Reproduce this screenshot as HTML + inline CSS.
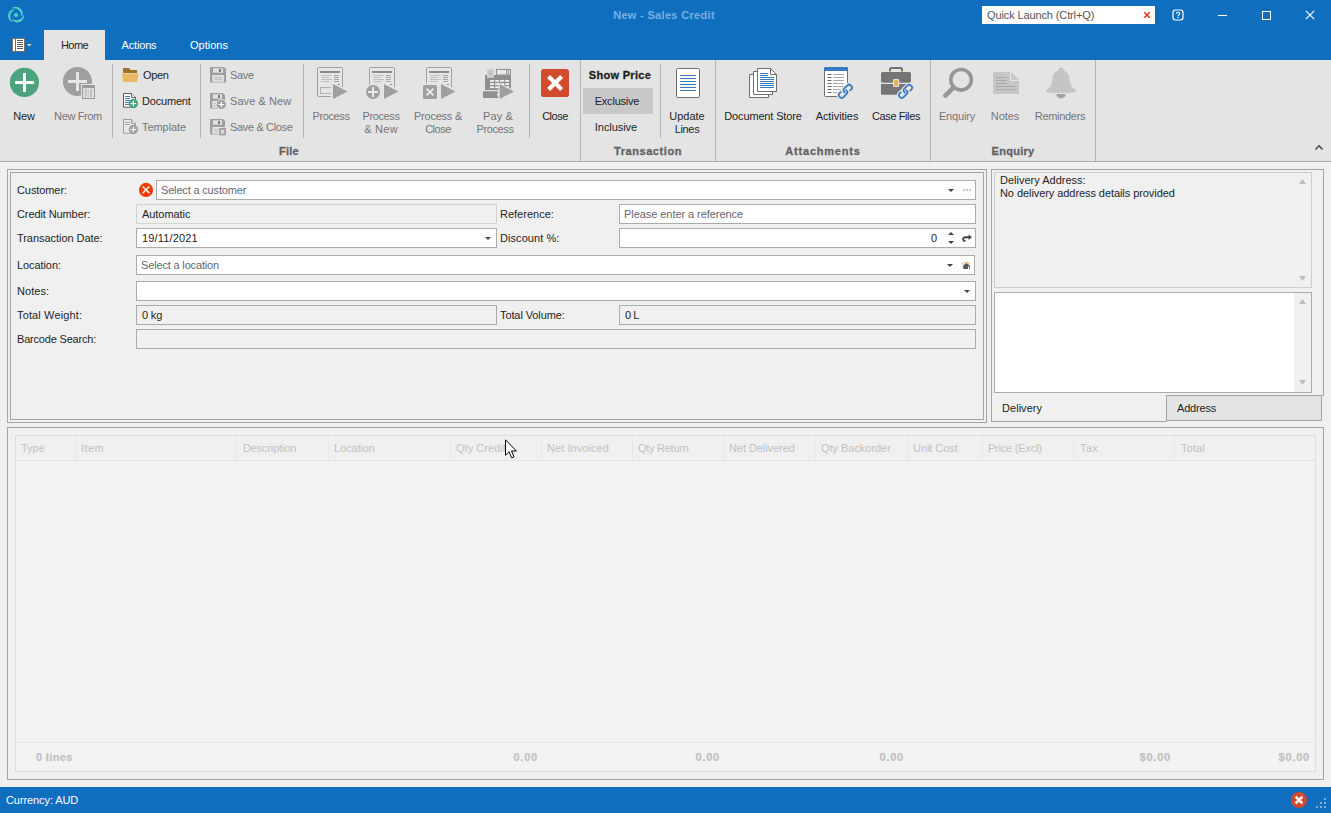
<!DOCTYPE html>
<html>
<head>
<meta charset="utf-8">
<title>New - Sales Credit</title>
<style>
*{box-sizing:border-box;margin:0;padding:0}
html,body{width:1331px;height:813px;overflow:hidden;background:#f0f0f0}
body{font-family:"Liberation Sans",sans-serif;font-size:11px;color:#1e1e1e;position:relative}
.a{position:absolute}
.t{position:absolute;white-space:nowrap;line-height:13px;height:13px}
.c{text-align:center}
.dis{color:#757575}
.b{font-weight:bold}
/* chrome */
#hdr{left:0;top:0;width:1331px;height:60px;background:#106ebe}
#rib{left:0;top:60px;width:1331px;height:101px;background:#e4e4e4}
#ribline{left:0;top:161px;width:1331px;height:1px;background:#ababab}
.vsep{position:absolute;width:1px;background:#b4b4b4;top:64px;height:74px}
.gsep{position:absolute;width:1px;background:#b4b4b4;top:60px;height:101px}
.glab{-webkit-text-stroke:0.3px #636363;position:absolute;white-space:nowrap;font-weight:bold;font-size:11px;color:#636363;line-height:14px;height:14px;text-align:center}
/* form */
.fld{position:absolute;height:20px;border:1px solid #ababab;background:#fff}
.fld.ro{background:#f0f0f0;border-color:#d2d2d2}
.fld.ro2{background:#f0f0f0;border-color:#ababab}
.ph{color:#666672}
.box{position:absolute;border:1px solid #a5a5a5}
/* grid */
.gh{color:#c2c2c2}
.gf{color:#c2c2c2;font-weight:bold;-webkit-text-stroke:0.25px #c2c2c2}
.gcs{position:absolute;top:436px;width:1px;height:24px;background:#e8e8e8}
</style>
</head>
<body>
<!-- ===== title bar / tabs ===== -->
<div id="hdr" class="a"></div>
<div class="a" style="left:44px;top:30px;width:61px;height:31px;background:#e4e4e4"></div>
<div class="t c" style="left:44px;top:39px;width:61px;font-size:11px;letter-spacing:-0.60px">Home</div>
<div class="t c" style="left:108px;top:39px;width:62px;color:#fff;font-size:11px;letter-spacing:-0.18px">Actions</div>
<div class="t c" style="left:178px;top:39px;width:62px;color:#fff;font-size:11px">Options</div>
<div class="t c b" style="left:564px;top:8px;width:200px;color:#78aee6;font-size:11px;line-height:14px;height:14px;letter-spacing:0.32px">New - Sales Credit</div>
<!-- quick launch -->
<div class="a" style="left:982px;top:6px;width:173px;height:18px;background:#fff"></div>
<div class="t" style="left:987px;top:9px;color:#555;font-size:11px;letter-spacing:-0.12px">Quick Launch (Ctrl+Q)</div>

<!-- app logo -->
<svg class="a" style="left:7px;top:6px" width="18" height="18" viewBox="-9 -9 18 18">
 <g fill="#52d0c0"><path d="M-4.86 -6.23 L-4.23 -6.81 L-3.50 -7.28 L-2.71 -7.66 L-1.88 -7.92 L-1.02 -8.09 L-0.14 -8.15 L0.73 -8.09 L1.59 -7.93 L2.42 -7.67 L3.20 -7.31 L3.93 -6.85 L4.58 -6.31 L5.16 -5.70 L5.65 -5.03 L6.04 -4.31 L6.33 -3.56 L6.51 -2.79 L6.60 -2.02 L6.57 -1.26 L6.46 -0.53 L6.24 0.16 L5.94 0.80 L5.56 1.37 L5.07 1.85 L5.07 1.85 L5.13 1.26 L5.17 0.70 L5.18 0.14 L5.14 -0.42 L5.06 -0.97 L4.93 -1.51 L4.76 -2.04 L4.54 -2.55 L4.28 -3.05 L3.98 -3.54 L3.63 -4.01 L3.23 -4.45 L2.79 -4.87 L2.30 -5.26 L1.77 -5.61 L1.19 -5.92 L0.56 -6.19 L-0.11 -6.40 L-0.82 -6.55 L-1.57 -6.64 L-2.35 -6.65 L-3.16 -6.58 L-3.99 -6.43 L-4.86 -6.23Z"/><path d="M7.82 -1.10 L8.02 -0.26 L8.06 0.61 L7.98 1.48 L7.80 2.34 L7.51 3.16 L7.13 3.95 L6.64 4.68 L6.08 5.34 L5.43 5.93 L4.73 6.43 L3.97 6.83 L3.17 7.13 L2.35 7.32 L1.53 7.40 L0.71 7.38 L-0.08 7.26 L-0.84 7.03 L-1.55 6.72 L-2.20 6.32 L-2.77 5.85 L-3.26 5.33 L-3.67 4.75 L-3.97 4.13 L-4.14 3.47 L-4.14 3.47 L-3.66 3.81 L-3.19 4.13 L-2.71 4.42 L-2.21 4.66 L-1.69 4.86 L-1.16 5.02 L-0.62 5.14 L-0.06 5.21 L0.50 5.23 L1.08 5.21 L1.65 5.14 L2.24 5.02 L2.82 4.85 L3.40 4.62 L3.97 4.34 L4.54 3.99 L5.08 3.58 L5.60 3.10 L6.09 2.56 L6.54 1.96 L6.94 1.29 L7.28 0.55 L7.57 -0.24 L7.82 -1.10Z"/><path d="M-2.96 7.32 L-3.79 7.07 L-4.56 6.67 L-5.27 6.18 L-5.92 5.59 L-6.50 4.93 L-6.98 4.20 L-7.37 3.41 L-7.67 2.59 L-7.85 1.74 L-7.93 0.88 L-7.90 0.02 L-7.76 -0.82 L-7.52 -1.62 L-7.18 -2.38 L-6.75 -3.08 L-6.24 -3.70 L-5.67 -4.25 L-5.04 -4.70 L-4.38 -5.06 L-3.68 -5.33 L-2.98 -5.49 L-2.28 -5.55 L-1.60 -5.50 L-0.94 -5.32 L-0.94 -5.32 L-1.47 -5.07 L-1.98 -4.83 L-2.47 -4.55 L-2.93 -4.24 L-3.37 -3.89 L-3.77 -3.51 L-4.14 -3.10 L-4.48 -2.66 L-4.78 -2.18 L-5.05 -1.67 L-5.28 -1.14 L-5.47 -0.57 L-5.61 0.02 L-5.70 0.63 L-5.74 1.27 L-5.72 1.93 L-5.64 2.61 L-5.49 3.30 L-5.26 3.99 L-4.96 4.68 L-4.58 5.36 L-4.12 6.03 L-3.57 6.67 L-2.96 7.32Z"/></g>
 <circle cx="0" cy="0" r="2.0" fill="#52d0c0"/>
 <circle cx="0" cy="0" r="3.5" fill="none" stroke="#2f8fd0" stroke-width="0.6" opacity="0.5"/>
</svg>
<!-- menu button -->
<svg class="a" style="left:12px;top:38px" width="22" height="14" viewBox="0 0 22 14">
 <rect x="0.5" y="0.5" width="12" height="13" fill="#fff" stroke="#7d6e66" stroke-width="1"/>
 <rect x="3" y="1" width="1" height="12" fill="#6a6a6a"/>
 <g fill="#5a5a5a"><rect x="5" y="2" width="6" height="1"/><rect x="5" y="4" width="6" height="1"/><rect x="5" y="6" width="6" height="1"/><rect x="5" y="8" width="6" height="1"/><rect x="5" y="10" width="6" height="1"/></g>
 <path d="M14.7 6 L19.7 6 L17.2 8.6 Z" fill="#dcd6d0"/>
</svg>
<!-- quick launch clear -->
<svg class="a" style="left:1143px;top:11px" width="8" height="8" viewBox="0 0 8 8"><path d="M1.2 1.2 L6.8 6.8 M6.8 1.2 L1.2 6.8" stroke="#e03c14" stroke-width="1.6"/></svg>
<!-- help -->
<svg class="a" style="left:1172px;top:9px" width="12" height="12" viewBox="0 0 12 12">
 <rect x="1" y="1" width="10" height="10" rx="2.4" fill="none" stroke="#fff" stroke-width="1.2"/>
 <path d="M4.3 4.7 Q4.3 3.2 6 3.2 Q7.7 3.2 7.7 4.6 Q7.7 5.5 6.7 6 Q6 6.4 6 7.2" fill="none" stroke="#fff" stroke-width="1.1"/>
 <rect x="5.45" y="7.9" width="1.1" height="1.1" fill="#fff"/>
</svg>
<!-- minimize -->
<div class="a" style="left:1218px;top:15px;width:9px;height:1px;background:#fff"></div>
<!-- maximize -->
<div class="a" style="left:1262px;top:11px;width:9px;height:9px;border:1px solid #fff"></div>
<!-- close -->
<svg class="a" style="left:1305px;top:10px" width="10" height="10" viewBox="0 0 10 10"><path d="M0.8 0.8 L9.2 9.2 M9.2 0.8 L0.8 9.2" stroke="#fff" stroke-width="1.2"/></svg>
<!--ICONS-HDR-->

<!-- ===== ribbon ===== -->
<div id="rib" class="a"></div>
<div id="ribline" class="a"></div>
<div class="vsep" style="left:112px"></div>
<div class="vsep" style="left:200px"></div>
<div class="vsep" style="left:303px"></div>
<div class="vsep" style="left:529px"></div>
<div class="vsep" style="left:660px"></div>
<div class="gsep" style="left:580px"></div>
<div class="gsep" style="left:715px"></div>
<div class="gsep" style="left:930px"></div>
<div class="gsep" style="left:1095px"></div>

<div class="t c" style="left:0;top:110px;width:48px;letter-spacing:-0.11px">New</div>
<div class="t c dis" style="left:48px;top:110px;width:60px;letter-spacing:-0.36px">New From</div>
<div class="t" style="left:143px;top:69px;letter-spacing:-0.37px">Open</div>
<div class="t" style="left:142px;top:95px;letter-spacing:-0.19px">Document</div>
<div class="t dis" style="left:142px;top:121px;letter-spacing:-0.06px">Template</div>
<div class="t dis" style="left:230px;top:69px;letter-spacing:-0.33px">Save</div>
<div class="t dis" style="left:230px;top:95px;letter-spacing:0.07px">Save &amp; New</div>
<div class="t dis" style="left:230px;top:121px;letter-spacing:-0.35px">Save &amp; Close</div>
<div class="t c dis" style="left:306px;top:110px;width:50px;letter-spacing:-0.38px">Process</div>
<div class="t c dis" style="left:356px;top:110px;width:50px;letter-spacing:-0.38px">Process</div>
<div class="t c dis" style="left:356px;top:123px;width:50px;letter-spacing:0.27px">&amp; New</div>
<div class="t c dis" style="left:408px;top:110px;width:60px;letter-spacing:-0.23px">Process &amp;</div>
<div class="t c dis" style="left:408px;top:123px;width:60px;letter-spacing:-0.48px">Close</div>
<div class="t c dis" style="left:471px;top:110px;width:54px;letter-spacing:0.09px">Pay &amp;</div>
<div class="t c dis" style="left:468px;top:123px;width:54px;letter-spacing:-0.38px">Process</div>
<div class="t c" style="left:530px;top:110px;width:50px;letter-spacing:-0.48px">Close</div>
<div class="t c b" style="left:583px;top:68px;width:74px;font-size:11px;line-height:14px;color:#1e1e1e;-webkit-text-stroke:0.3px #1e1e1e;letter-spacing:0.30px">Show Price</div>
<div class="a" style="left:583px;top:88px;width:70px;height:26px;background:#c8c8c8"></div>
<div class="t c" style="left:583px;top:95px;width:68px;letter-spacing:-0.21px">Exclusive</div>
<div class="t c" style="left:583px;top:121px;width:66px;letter-spacing:-0.06px">Inclusive</div>
<div class="t c" style="left:662px;top:110px;width:50px">Update</div>
<div class="t c" style="left:662px;top:123px;width:50px;letter-spacing:-0.32px">Lines</div>
<div class="t c" style="left:718px;top:110px;width:90px;letter-spacing:-0.15px">Document Store</div>
<div class="t c" style="left:808px;top:110px;width:58px;letter-spacing:-0.07px">Activities</div>
<div class="t c" style="left:866px;top:110px;width:60px;letter-spacing:-0.40px">Case Files</div>
<div class="t c dis" style="left:932px;top:110px;width:50px;letter-spacing:-0.15px">Enquiry</div>
<div class="t c dis" style="left:982px;top:110px;width:46px;letter-spacing:-0.06px">Notes</div>
<div class="t c dis" style="left:1030px;top:110px;width:60px;letter-spacing:-0.32px">Reminders</div>

<div class="glab" style="left:259px;top:144px;width:60px;letter-spacing:0.28px">File</div>
<div class="glab" style="left:598px;top:144px;width:100px;letter-spacing:0.56px">Transaction</div>
<div class="glab" style="left:773px;top:144px;width:100px;letter-spacing:0.79px">Attachments</div>
<div class="glab" style="left:983px;top:144px;width:60px;letter-spacing:0.26px">Enquiry</div>

<!-- New -->
<svg class="a" style="left:8px;top:66px" width="34" height="34" viewBox="8 66 34 34">
 <circle cx="24.4" cy="82.4" r="14.6" fill="#4ca47f"/>
 <rect x="15" y="81" width="19" height="3" fill="#fff"/><rect x="23" y="73" width="3" height="19" fill="#fff"/>
</svg>
<!-- New From -->
<svg class="a" style="left:61px;top:65px" width="36" height="36" viewBox="61 65 36 36">
 <circle cx="77.4" cy="81.4" r="14.5" fill="#9f9f9f"/>
 <rect x="68" y="80" width="19" height="3" fill="#e6e6e6"/><rect x="76" y="72" width="3" height="19" fill="#e6e6e6"/>
 <rect x="81" y="84" width="15" height="16" fill="#e4e4e4"/>
 <rect x="82.5" y="85.5" width="12" height="13" fill="#dedede" stroke="#9a9a9a" stroke-width="1"/>
 <rect x="83" y="86" width="11" height="2" fill="#9a9a9a"/>
 <rect x="85" y="89" width="2" height="8" fill="#c2c2c2"/><rect x="88" y="89" width="1" height="8" fill="#cfcfcf"/><rect x="90" y="89" width="2" height="8" fill="#c2c2c2"/>
</svg>

<!-- Open -->
<svg class="a" style="left:122px;top:68px" width="17" height="15" viewBox="0 0 17 15">
 <path d="M1 0 L7 0 L8.6 1.9 L15 1.9 L15 5 L1 5 Z" fill="#9a7428"/>
 <path d="M0 5.6 L16.3 5.6 L15.3 14 L1 14 Z" fill="#e9b863"/>
</svg>
<!-- Document -->
<svg class="a" style="left:122px;top:92px" width="17" height="17" viewBox="0 0 17 17">
 <path d="M1.5 1.5 L9.5 1.5 L13.4 5.4 L13.4 15.2 L1.5 15.2 Z" fill="#fff" stroke="#5a5a5a" stroke-width="1" stroke-linejoin="round"/>
 <path d="M9.5 1.5 L9.5 5.4 L13.4 5.4" fill="#fff" stroke="#5a5a5a" stroke-width="1" stroke-linejoin="round"/>
 <rect x="3" y="4" width="5" height="1" fill="#3f80c6"/><rect x="3" y="6" width="5" height="1" fill="#3f80c6"/><rect x="3" y="8" width="5" height="1" fill="#3f80c6"/><rect x="3" y="10" width="5" height="1" fill="#3f80c6"/><rect x="3" y="12" width="5" height="1" fill="#3f80c6"/>
 <circle cx="11.4" cy="11.5" r="4.7" fill="#4ca47f"/>
 <rect x="8.6" y="11" width="5.6" height="1.1" fill="#fff"/><rect x="10.85" y="8.7" width="1.1" height="5.6" fill="#fff"/>
</svg>
<!-- Template -->
<svg class="a" style="left:122px;top:118px" width="17" height="17" viewBox="0 0 17 17">
 <path d="M1.5 1.5 L9.5 1.5 L13.4 5.4 L13.4 15.2 L1.5 15.2 Z" fill="#e8e8e8" stroke="#9c9c9c" stroke-width="1" stroke-linejoin="round"/>
 <path d="M9.5 1.5 L9.5 5.4 L13.4 5.4" fill="#e8e8e8" stroke="#9c9c9c" stroke-width="1" stroke-linejoin="round"/>
 <rect x="3" y="4" width="5" height="1" fill="#a8a8a8"/><rect x="3" y="6" width="5" height="1" fill="#a8a8a8"/>
 <circle cx="11.4" cy="11.5" r="4.7" fill="#a0a0a0"/>
 <rect x="8.6" y="11" width="5.6" height="1.1" fill="#fff"/><rect x="10.85" y="8.7" width="1.1" height="5.6" fill="#fff"/>
</svg>

<!-- Save -->
<svg class="a" style="left:210px;top:67px" width="18" height="18" viewBox="0 0 18 18">
 <path d="M0 0 L14 0 L16 2 L16 15.6 L0 15.6 Z" fill="#9f9f9f"/>
 <rect x="3" y="1.3" width="10" height="4.4" fill="#e2e2e2"/>
 <rect x="9" y="2" width="2" height="3" fill="#7a7a7a"/>
 <rect x="2.3" y="8" width="11.6" height="6.8" fill="#e2e2e2"/>
 <rect x="4" y="10" width="8" height="0.9" fill="#b8b8b8"/><rect x="4" y="12.2" width="8" height="0.9" fill="#b8b8b8"/>
 
</svg>
<!-- Save & New -->
<svg class="a" style="left:210px;top:93px" width="18" height="18" viewBox="0 0 18 18">
 <path d="M0 0 L13 0 L15 2 L15 15.6 L0 15.6 Z" fill="#9f9f9f"/>
 <rect x="3" y="1.3" width="9" height="4.4" fill="#e2e2e2"/>
 <rect x="8" y="2" width="2" height="3" fill="#7a7a7a"/>
 <rect x="2.3" y="8" width="10.6" height="6.8" fill="#e2e2e2"/>
 <rect x="4" y="10" width="7" height="0.9" fill="#b8b8b8"/><rect x="4" y="12.2" width="7" height="0.9" fill="#b8b8b8"/>
 <circle cx="11.4" cy="11.5" r="5.4" fill="#e4e4e4"/><circle cx="11.4" cy="11.5" r="4.6" fill="#a0a0a0"/>
 <rect x="8.6" y="11" width="5.6" height="1.1" fill="#fff"/><rect x="10.85" y="8.7" width="1.1" height="5.6" fill="#fff"/>
</svg>
<!-- Save & Close -->
<svg class="a" style="left:210px;top:119px" width="18" height="18" viewBox="0 0 18 18">
 <path d="M0 0 L13 0 L15 2 L15 15.6 L0 15.6 Z" fill="#9f9f9f"/>
 <rect x="3" y="1.3" width="9" height="4.4" fill="#e2e2e2"/>
 <rect x="8" y="2" width="2" height="3" fill="#7a7a7a"/>
 <rect x="2.3" y="8" width="10.6" height="6.8" fill="#e2e2e2"/>
 <rect x="4" y="10" width="7" height="0.9" fill="#b8b8b8"/><rect x="4" y="12.2" width="7" height="0.9" fill="#b8b8b8"/>
 <rect x="8.2" y="8.2" width="9" height="9" fill="#e4e4e4"/><rect x="9" y="9" width="7" height="7.4" fill="#a0a0a0"/>
 <path d="M10.8 10.9 L14.2 14.5 M14.2 10.9 L10.8 14.5" stroke="#e8e8e8" stroke-width="1.3"/>
</svg>

<!-- Process -->
<svg class="a" style="left:314px;top:64px" width="36" height="38" viewBox="314 64 36 38">
 <rect x="317.5" y="67.5" width="25" height="29" rx="1.2" fill="#e6e6e6" stroke="#9f9f9f" stroke-width="1"/>
 <rect x="320.0" y="71" width="20" height="2" fill="#8c8c8c"/>
 <rect x="321.0" y="75" width="11" height="1" fill="#c0c0c0"/>
 <rect x="334.0" y="75" width="5" height="1" fill="#a6a6a6"/>
 <rect x="321.0" y="77" width="8" height="1" fill="#c0c0c0"/>
 <rect x="334.0" y="77" width="5" height="1" fill="#a6a6a6"/>
 <rect x="321.0" y="79" width="11" height="1" fill="#c0c0c0"/>
 <rect x="334.0" y="79" width="5" height="1" fill="#a6a6a6"/>
 <rect x="321.0" y="81" width="8" height="1" fill="#c0c0c0"/>
 <rect x="334.0" y="81" width="5" height="1" fill="#a6a6a6"/>
 <rect x="338.0" y="84" width="2" height="1" fill="#8c8c8c"/>
 <rect x="320.5" y="87.5" width="11" height="6" fill="none" stroke="#b2b2b2" stroke-width="1"/><rect x="331" y="87" width="13" height="11" fill="#e4e4e4"/>
 <path d="M331.8 82.3 L349.3 91.5 L331.8 100.7 Z" fill="#e4e4e4"/><path d="M333 84 L347.4 91.5 L333 99 Z" fill="#9f9f9f"/>
</svg>
<!-- Process & New -->
<svg class="a" style="left:364px;top:64px" width="36" height="38" viewBox="364 64 36 38">
 <rect x="369.5" y="67.5" width="25" height="29" rx="1.2" fill="#e6e6e6" stroke="#9f9f9f" stroke-width="1"/>
 <rect x="372.0" y="71" width="20" height="2" fill="#8c8c8c"/>
 <rect x="373.0" y="75" width="11" height="1" fill="#c0c0c0"/>
 <rect x="386.0" y="75" width="5" height="1" fill="#a6a6a6"/>
 <rect x="373.0" y="77" width="8" height="1" fill="#c0c0c0"/>
 <rect x="386.0" y="77" width="5" height="1" fill="#a6a6a6"/>
 <rect x="373.0" y="79" width="11" height="1" fill="#c0c0c0"/>
 <rect x="386.0" y="79" width="5" height="1" fill="#a6a6a6"/>
 <rect x="373.0" y="81" width="8" height="1" fill="#c0c0c0"/>
 <rect x="386.0" y="81" width="5" height="1" fill="#a6a6a6"/>
 <rect x="390.0" y="84" width="2" height="1" fill="#8c8c8c"/>
 <rect x="366" y="84.6" width="20" height="14" fill="#e4e4e4"/><rect x="386" y="87.2" width="12" height="12" fill="#e4e4e4"/>
 <circle cx="373" cy="92" r="7" fill="#9f9f9f"/><rect x="368" y="91" width="10" height="2" fill="#e8e8e8"/><rect x="372" y="87" width="2" height="10" fill="#e8e8e8"/>
 <path d="M382.8 82.3 L400.3 91.5 L382.8 100.7 Z" fill="#e4e4e4"/><path d="M384 84 L398.4 91.5 L384 99 Z" fill="#9f9f9f"/>
</svg>
<!-- Process & Close -->
<svg class="a" style="left:420px;top:64px" width="38" height="38" viewBox="420 64 38 38">
 <rect x="426.5" y="67.5" width="25" height="29" rx="1.2" fill="#e6e6e6" stroke="#9f9f9f" stroke-width="1"/>
 <rect x="429.0" y="71" width="20" height="2" fill="#8c8c8c"/>
 <rect x="430.0" y="75" width="11" height="1" fill="#c0c0c0"/>
 <rect x="443.0" y="75" width="5" height="1" fill="#a6a6a6"/>
 <rect x="430.0" y="77" width="8" height="1" fill="#c0c0c0"/>
 <rect x="443.0" y="77" width="5" height="1" fill="#a6a6a6"/>
 <rect x="430.0" y="79" width="11" height="1" fill="#c0c0c0"/>
 <rect x="443.0" y="79" width="5" height="1" fill="#a6a6a6"/>
 <rect x="430.0" y="81" width="8" height="1" fill="#c0c0c0"/>
 <rect x="443.0" y="81" width="5" height="1" fill="#a6a6a6"/>
 <rect x="447.0" y="84" width="2" height="1" fill="#8c8c8c"/>
 <rect x="422" y="83.6" width="20" height="15" fill="#e4e4e4"/><rect x="442" y="87.2" width="12" height="12" fill="#e4e4e4"/>
 <rect x="423" y="85" width="14" height="14" rx="1.6" fill="#9f9f9f"/><path d="M426.6 88.6 L433.4 95.4 M433.4 88.6 L426.6 95.4" stroke="#e8e8e8" stroke-width="2"/>
 <path d="M439.8 82.3 L457.3 91.5 L439.8 100.7 Z" fill="#e4e4e4"/><path d="M441 84 L455.4 91.5 L441 99 Z" fill="#9f9f9f"/>
</svg>
<!-- Pay & Process -->
<svg class="a" style="left:481px;top:64px" width="36" height="38" viewBox="481 64 36 38">
 <rect x="485" y="75" width="26" height="15" fill="#8f8f8f"/>
 <rect x="487" y="68.8" width="7" height="9" fill="#cfcfcf"/><rect x="489" y="71.5" width="3" height="0.9" fill="#a8a8a8"/><rect x="489" y="73.5" width="3" height="0.9" fill="#a8a8a8"/>
 <rect x="496.5" y="69.4" width="14" height="5.6" fill="#e8e8e8" stroke="#8f8f8f" stroke-width="1"/>
 <rect x="506.6" y="70.6" width="2" height="3" fill="none" stroke="#8f8f8f" stroke-width="0.8"/>
 <rect x="490" y="80" width="4" height="1.8" fill="#f0f0f0"/><rect x="495.1" y="80" width="4" height="1.8" fill="#f0f0f0"/><rect x="500.2" y="80" width="4" height="1.8" fill="#f0f0f0"/><rect x="505.2" y="80" width="4" height="1.8" fill="#f0f0f0"/><rect x="490" y="83.2" width="4" height="1.8" fill="#f0f0f0"/><rect x="495.1" y="83.2" width="4" height="1.8" fill="#f0f0f0"/><rect x="500.2" y="83.2" width="4" height="1.8" fill="#f0f0f0"/><rect x="505.2" y="83.2" width="4" height="1.8" fill="#f0f0f0"/><rect x="490" y="86.3" width="4" height="1.8" fill="#f0f0f0"/><rect x="495.1" y="86.3" width="4" height="1.8" fill="#f0f0f0"/><rect x="500.2" y="86.3" width="4" height="1.8" fill="#f0f0f0"/><rect x="505.2" y="86.3" width="4" height="1.8" fill="#f0f0f0"/>
 <path d="M483 91.3 L498 91.3 L498 93 Q496 94.6 498 96.2 L498 98 L483 98 Z" fill="#8f8f8f"/>
 <path d="M498.40000000000003 82.3 L515.9 91.5 L498.40000000000003 100.7 Z" fill="#e4e4e4"/><path d="M499.6 84 L514.0 91.5 L499.6 99 Z" fill="#9f9f9f"/>
</svg>

<!-- Close -->
<svg class="a" style="left:540px;top:68px" width="30" height="30" viewBox="540 68 30 30">
 <rect x="541" y="69" width="28" height="28" rx="2.8" fill="#d14b2d"/><path d="M548.6 76.6 L561.6 89.6 M561.6 76.6 L548.6 89.6" stroke="#fff" stroke-width="4.2"/>
</svg>
<!-- Update Lines -->
<svg class="a" style="left:675px;top:67px" width="26" height="32" viewBox="675 67 26 32">
 <rect x="676.5" y="68.5" width="23" height="29" rx="1.2" fill="#fff" stroke="#6f6f6f" stroke-width="1"/><rect x="680" y="75" width="16" height="1" fill="#3b78be"/><rect x="680" y="78" width="16" height="1" fill="#3b78be"/><rect x="680" y="81" width="16" height="1" fill="#3b78be"/><rect x="680" y="84" width="16" height="1" fill="#3b78be"/><rect x="680" y="87" width="16" height="1" fill="#3b78be"/><rect x="680" y="90" width="16" height="1" fill="#3b78be"/>
</svg>
<!-- Document Store -->
<svg class="a" style="left:748px;top:67px" width="30" height="32" viewBox="748 67 30 32">
 <path d="M753 74.5 L749.5 74.5 L749.5 97.5 L768.5 97.5 L768.5 95" fill="#fff" stroke="#6f6f6f" stroke-width="1" stroke-linejoin="round"/>
 <rect x="750" y="75" width="18" height="22" fill="#fff"/>
 <path d="M757 71.5 L753.5 71.5 L753.5 94.5 L772.5 94.5 L772.5 92" fill="#fff" stroke="#6f6f6f" stroke-width="1" stroke-linejoin="round"/>
 <rect x="754" y="72" width="18" height="22" fill="#fff"/>
 <path d="M757.5 68.5 L770.5 68.5 L776.5 74.5 L776.5 91.5 L757.5 91.5 Z" fill="#fff" stroke="#6f6f6f" stroke-width="1" stroke-linejoin="round"/>
 <path d="M770.5 68.5 L770.5 74.5 L776.5 74.5" fill="none" stroke="#6f6f6f" stroke-width="1" stroke-linejoin="round"/><rect x="760" y="73" width="8" height="1" fill="#3b78be"/><rect x="760" y="75" width="8" height="1" fill="#3b78be"/><rect x="760" y="77" width="14" height="1" fill="#3b78be"/><rect x="760" y="79" width="14" height="1" fill="#3b78be"/><rect x="760" y="81" width="14" height="1" fill="#3b78be"/><rect x="760" y="83" width="14" height="1" fill="#3b78be"/><rect x="760" y="85" width="14" height="1" fill="#3b78be"/><rect x="760" y="87" width="14" height="1" fill="#3b78be"/>
</svg>
<!-- Activities -->
<svg class="a" style="left:822px;top:65px" width="34" height="36" viewBox="822 65 34 36">
 <rect x="824.5" y="67.5" width="23" height="29" rx="1" fill="#fff" stroke="#6f6f6f" stroke-width="1"/>
 <path d="M824 71 L824 68.2 Q824 67 825.2 67 L846.8 67 Q848 67 848 68.2 L848 71 Z" fill="#3a7abf"/><rect x="827.5" y="74" width="4" height="1" fill="#666"/><rect x="833" y="74" width="11" height="1" fill="#aaa"/><rect x="827.5" y="77" width="4" height="1" fill="#666"/><rect x="833" y="77" width="11" height="1" fill="#aaa"/><rect x="827.5" y="80" width="4" height="1" fill="#666"/><rect x="833" y="80" width="11" height="1" fill="#aaa"/><rect x="827.5" y="83" width="4" height="1" fill="#666"/><rect x="833" y="83" width="11" height="1" fill="#aaa"/><rect x="827.5" y="86" width="4" height="1" fill="#666"/><rect x="833" y="86" width="11" height="1" fill="#aaa"/><rect x="827.5" y="89" width="4" height="1" fill="#666"/><rect x="833" y="89" width="11" height="1" fill="#aaa"/><rect x="827.5" y="92" width="4" height="1" fill="#666"/><rect x="833" y="92" width="11" height="1" fill="#aaa"/>
 <g transform="translate(845.4 91.3) rotate(-45)" fill="none" stroke-linecap="butt">
  <path d="M-9.6 -1 Q-9.6 -4.4 -6.2 -4.4 L6.2 -4.4 Q9.6 -4.4 9.6 -1 L9.6 12 L-9.6 12 Z" fill="#e4e4e4"/>
  <g stroke="#e4e4e4" stroke-width="4" stroke-linecap="round"><path d="M-3.3 -2.75 L-5.75 -2.75 A2.2 2.2 0 0 0 -7.95 -0.55 L-7.95 0.55 A2.2 2.2 0 0 0 -5.75 2.75 L-0.9 2.75 A2.2 2.2 0 0 0 1.3 0.55 L1.3 -1.0"/><path d="M3.3 2.75 L5.75 2.75 A2.2 2.2 0 0 0 7.95 0.55 L7.95 -0.55 A2.2 2.2 0 0 0 5.75 -2.75 L0.9 -2.75 A2.2 2.2 0 0 0 -1.3 -0.55 L-1.3 1.0"/></g>
  <g stroke="#3a7abf" stroke-width="1.75"><path d="M-3.3 -2.75 L-5.75 -2.75 A2.2 2.2 0 0 0 -7.95 -0.55 L-7.95 0.55 A2.2 2.2 0 0 0 -5.75 2.75 L-0.9 2.75 A2.2 2.2 0 0 0 1.3 0.55 L1.3 -1.0"/><path d="M3.3 2.75 L5.75 2.75 A2.2 2.2 0 0 0 7.95 0.55 L7.95 -0.55 A2.2 2.2 0 0 0 5.75 -2.75 L0.9 -2.75 A2.2 2.2 0 0 0 -1.3 -0.55 L-1.3 1.0"/></g>
 </g>
</svg>
<!-- Case Files -->
<svg class="a" style="left:879px;top:65px" width="37" height="36" viewBox="879 65 37 36">
 <path d="M890 72 L890 69.6 Q890 68 891.6 68 L900.4 68 Q902 68 902 69.6 L902 72" fill="none" stroke="#727272" stroke-width="2"/>
 <rect x="889" y="71" width="2" height="1.2" fill="#e8b050"/><rect x="901" y="71" width="2" height="1.2" fill="#e8b050"/>
 <rect x="881" y="72" width="30" height="10.7" rx="1.6" fill="#757575"/>
 <path d="M881 84 L911 84 L911 93.2 Q911 94.8 909.4 94.8 L882.6 94.8 Q881 94.8 881 93.2 Z" fill="#757575"/>
 <rect x="893" y="79" width="6.2" height="8" rx="1.4" fill="#e4e4e4"/><rect x="894.1" y="80" width="4" height="5.9" rx="0.6" fill="#e8b050"/>
 
 <g transform="translate(905.5 91.4) rotate(-45)" fill="none" stroke-linecap="butt">
  <path d="M-9.6 -1 Q-9.6 -4.4 -6.2 -4.4 L6.2 -4.4 Q9.6 -4.4 9.6 -1 L9.6 12 L-9.6 12 Z" fill="#e4e4e4"/>
  <g stroke="#e4e4e4" stroke-width="4" stroke-linecap="round"><path d="M-3.3 -2.75 L-5.75 -2.75 A2.2 2.2 0 0 0 -7.95 -0.55 L-7.95 0.55 A2.2 2.2 0 0 0 -5.75 2.75 L-0.9 2.75 A2.2 2.2 0 0 0 1.3 0.55 L1.3 -1.0"/><path d="M3.3 2.75 L5.75 2.75 A2.2 2.2 0 0 0 7.95 0.55 L7.95 -0.55 A2.2 2.2 0 0 0 5.75 -2.75 L0.9 -2.75 A2.2 2.2 0 0 0 -1.3 -0.55 L-1.3 1.0"/></g>
  <g stroke="#3a7abf" stroke-width="1.75"><path d="M-3.3 -2.75 L-5.75 -2.75 A2.2 2.2 0 0 0 -7.95 -0.55 L-7.95 0.55 A2.2 2.2 0 0 0 -5.75 2.75 L-0.9 2.75 A2.2 2.2 0 0 0 1.3 0.55 L1.3 -1.0"/><path d="M3.3 2.75 L5.75 2.75 A2.2 2.2 0 0 0 7.95 0.55 L7.95 -0.55 A2.2 2.2 0 0 0 5.75 -2.75 L0.9 -2.75 A2.2 2.2 0 0 0 -1.3 -0.55 L-1.3 1.0"/></g>
 </g>
</svg>
<!-- Enquiry -->
<svg class="a" style="left:941px;top:65px" width="34" height="35" viewBox="941 65 34 35">
 <circle cx="961.1" cy="79.8" r="10.3" fill="none" stroke="#969696" stroke-width="3.6"/><path d="M953.6 87.4 L945.4 95.6" stroke="#969696" stroke-width="4.6" stroke-linecap="round"/>
</svg>
<!-- Notes -->
<svg class="a" style="left:992px;top:70px" width="28" height="26" viewBox="992 70 28 26">
 <path d="M993 72 L1010 72 L1010 81 L1019 81 L1019 94 L993 94 Z" fill="#c6c6c6"/><path d="M1011.2 72 L1019 79.8 L1011.2 79.8 Z" fill="#c6c6c6"/><rect x="996" y="77" width="11" height="1" fill="#a9a9a9"/><rect x="996" y="80" width="11" height="1" fill="#a9a9a9"/><rect x="996" y="83" width="11" height="1" fill="#a9a9a9"/><rect x="996" y="86" width="20" height="1" fill="#a9a9a9"/><rect x="996" y="89" width="20" height="1" fill="#a9a9a9"/>
</svg>
<!-- Reminders -->
<svg class="a" style="left:1044px;top:66px" width="34" height="34" viewBox="1044 66 34 34">
 <circle cx="1061" cy="70" r="2.5" fill="#c5c5c5"/>
 <path d="M1061 70.2 C1066.5 70.2 1069.4 74.2 1069.6 79 C1069.9 85 1072.5 88 1076 90.6 C1076.4 91.2 1076 92 1075 92.2 Q1061 94 1047 92.2 C1046 92 1045.6 91.2 1046 90.6 C1049.5 88 1052.1 85 1052.4 79 C1052.6 74.2 1055.5 70.2 1061 70.2 Z" fill="#c5c5c5"/>
 <path d="M1056.4 94 L1065.8 94 A4.7 4.2 0 0 1 1056.4 94 Z" fill="#a2a2a2"/>
</svg>
<svg class="a" style="left:1314px;top:144px" width="10" height="7" viewBox="0 0 10 7"><path d="M1.5 5.5 L5 1.8 L8.5 5.5" fill="none" stroke="#444" stroke-width="1.5"/></svg>
<!--ICONS-RIB-->

<!-- ===== form panel ===== -->
<div class="box" style="left:7px;top:169px;width:980px;height:254px"></div>
<div class="box" style="left:10px;top:172px;width:974px;height:248px"></div>

<div class="t" style="left:17px;top:184px;letter-spacing:-0.09px">Customer:</div>
<div class="t" style="left:17px;top:208px;letter-spacing:-0.10px">Credit Number:</div>
<div class="t" style="left:17px;top:232px;letter-spacing:-0.05px">Transaction Date:</div>
<div class="t" style="left:17px;top:259px;letter-spacing:-0.08px">Location:</div>
<div class="t" style="left:17px;top:285px;letter-spacing:0.04px">Notes:</div>
<div class="t" style="left:17px;top:309px;letter-spacing:0.13px">Total Weight:</div>
<div class="t" style="left:17px;top:333px;letter-spacing:-0.19px">Barcode Search:</div>
<div class="t" style="left:500px;top:208px">Reference:</div>
<div class="t" style="left:500px;top:232px;letter-spacing:0.07px">Discount %:</div>
<div class="t" style="left:500px;top:309px;letter-spacing:-0.10px">Total Volume:</div>

<div class="fld" style="left:156px;top:180px;width:820px"></div>
<div class="fld ro" style="left:136px;top:204px;width:361px"></div>
<div class="fld" style="left:136px;top:228px;width:361px"></div>
<div class="fld" style="left:136px;top:255px;width:839px"></div>
<div class="fld" style="left:136px;top:281px;width:840px"></div>
<div class="fld ro2" style="left:136px;top:305px;width:361px"></div>
<div class="fld ro2" style="left:136px;top:329px;width:840px"></div>
<div class="fld" style="left:619px;top:204px;width:357px"></div>
<div class="fld" style="left:619px;top:228px;width:357px"></div>
<div class="fld ro2" style="left:619px;top:305px;width:357px"></div>

<div class="t ph" style="left:161px;top:184px;letter-spacing:-0.17px">Select a customer</div>
<div class="t" style="left:142px;top:208px;letter-spacing:-0.05px">Automatic</div>
<div class="t" style="left:142px;top:232px;letter-spacing:0.15px">19/11/2021</div>
<div class="t ph" style="left:141px;top:259px;letter-spacing:-0.16px">Select a location</div>
<div class="t" style="left:142px;top:309px;letter-spacing:-0.17px">0 kg</div>
<div class="t ph" style="left:624px;top:208px;letter-spacing:-0.06px">Please enter a reference</div>
<div class="t" style="left:931px;top:232px">0</div>
<div class="t" style="left:625px;top:309px;letter-spacing:-0.40px">0 L</div>

<!-- error icon -->
<svg class="a" style="left:138px;top:182px" width="16" height="16" viewBox="0 0 16 16"><circle cx="8" cy="7.9" r="7.1" fill="#ee3c02"/><path d="M4.6 4.5 L11.4 11.3 M11.4 4.5 L4.6 11.3" stroke="#fff" stroke-width="1.5"/></svg>
<svg class="a" style="left:948px;top:189px" width="6" height="4" viewBox="0 0 6 4"><path d="M0 0 L6 0 L3 3 Z" fill="#444"/></svg>
<div class="a" style="left:963px;top:189px;width:2px;height:2px;background:#cbcbcb"></div><div class="a" style="left:966px;top:189px;width:2px;height:2px;background:#cbcbcb"></div><div class="a" style="left:969px;top:189px;width:2px;height:2px;background:#cbcbcb"></div>
<svg class="a" style="left:485px;top:237px" width="6" height="4" viewBox="0 0 6 4"><path d="M0 0 L6 0 L3.0 3 Z" fill="#444"/></svg>
<svg class="a" style="left:948px;top:232px" width="6" height="3" viewBox="0 0 6 3"><path d="M0 3 L3 0 L6 3 Z" fill="#444"/></svg>
<svg class="a" style="left:948px;top:241px" width="6" height="4" viewBox="0 0 6 4"><path d="M0 0 L6 0 L3.0 3 Z" fill="#444"/></svg>
<svg class="a" style="left:961px;top:233px" width="12" height="10" viewBox="961 233 12 10"><path d="M969 237.2 L966 237.2 Q962.4 237.4 963.2 239.6 Q963.7 240.8 965.4 241.4" fill="none" stroke="#444" stroke-width="1.9"/><path d="M968.6 234.4 L972 237.2 L968.6 240 Z" fill="#444"/></svg>
<svg class="a" style="left:947px;top:264px" width="6" height="4" viewBox="0 0 6 4"><path d="M0 0 L6 0 L3 3 Z" fill="#444"/></svg>
<svg class="a" style="left:961px;top:260px" width="11" height="10" viewBox="961 260 11 10"><path d="M962.3 264.4 Q966.2 260 970 264.4" fill="none" stroke="#eaa235" stroke-width="1.1" stroke-dasharray="1.2 0.6"/><path d="M963.2 269 L963.2 265.6 L966.4 263 L969.9 265.6 L969.9 269 L969 269 L969 266.4 L968 266.4 L968 269 Z" fill="#595959"/></svg>
<svg class="a" style="left:964px;top:290px" width="6" height="4" viewBox="0 0 6 4"><path d="M0 0 L6 0 L3.0 3 Z" fill="#444"/></svg>
<!--ICONS-FORM-->

<!-- ===== right (delivery) panel ===== -->
<div class="a" style="left:991px;top:169px;width:333px;height:227px;border:1px solid #a5a5a5;border-bottom:none"></div>
<div class="a" style="left:991px;top:395px;width:176px;height:27px;border:1px solid #a5a5a5;border-top:none;border-right:none"></div>
<div class="a" style="left:1166px;top:395px;width:156px;height:26px;border:1px solid #a5a5a5;background:#e4e4e4"></div>
<div class="a" style="left:1322px;top:395px;width:2px;height:1px;background:#a5a5a5"></div>
<div class="a" style="left:994px;top:172px;width:318px;height:116px;border:1px solid #cdcdcd"></div>
<div class="a" style="left:994px;top:292px;width:318px;height:101px;border:1px solid #ababab;background:#fff"></div>
<div class="a" style="left:1294px;top:293px;width:17px;height:99px;background:#f0f0f0"></div>
<div class="t" style="left:1000px;top:174px">Delivery Address:</div>
<div class="t" style="left:1000px;top:187px;letter-spacing:-0.07px">No delivery address details provided</div>
<div class="t" style="left:1002px;top:402px;letter-spacing:0.04px">Delivery</div>
<div class="t" style="left:1177px;top:402px;letter-spacing:-0.18px">Address</div>

<svg class="a" style="left:1299px;top:179px" width="7" height="5" viewBox="0 0 7 5"><path d="M0 5 L3.5 0 L7 5 Z" fill="#bdbdbd"/></svg>
<svg class="a" style="left:1299px;top:276px" width="7" height="5" viewBox="0 0 7 5"><path d="M0 0 L7 0 L3.5 5 Z" fill="#bdbdbd"/></svg>
<svg class="a" style="left:1299px;top:299px" width="7" height="5" viewBox="0 0 7 5"><path d="M0 5 L3.5 0 L7 5 Z" fill="#bdbdbd"/></svg>
<svg class="a" style="left:1299px;top:380px" width="7" height="5" viewBox="0 0 7 5"><path d="M0 0 L7 0 L3.5 5 Z" fill="#bdbdbd"/></svg>
<!--ICONS-RIGHT-->

<!-- ===== grid ===== -->
<div class="box" style="left:7px;top:427px;width:1317px;height:353px"></div>
<div class="a" style="left:15px;top:435px;width:1301px;height:337px;border:1px solid #dedede;background:#f3f3f3"></div>
<div class="a" style="left:16px;top:436px;width:1299px;height:24px;background:#f0f0f0"></div>
<div class="a" style="left:16px;top:460px;width:1299px;height:1px;background:#e2e2e2"></div>
<div class="a" style="left:16px;top:742px;width:1299px;height:1px;background:#e6e6e6"></div>
<div class="gcs" style="left:75px"></div>
<div class="gcs" style="left:236px"></div>
<div class="gcs" style="left:328px"></div>
<div class="gcs" style="left:450px"></div>
<div class="gcs" style="left:541px"></div>
<div class="gcs" style="left:632px"></div>
<div class="gcs" style="left:723px"></div>
<div class="gcs" style="left:815px"></div>
<div class="gcs" style="left:907px"></div>
<div class="gcs" style="left:982px"></div>
<div class="gcs" style="left:1073px"></div>
<div class="gcs" style="left:1174px"></div>
<div class="t gh" style="left:21px;top:442px">Type</div>
<div class="t gh" style="left:81px;top:442px;letter-spacing:0.46px">Item</div>
<div class="t gh" style="left:243px;top:442px;letter-spacing:-0.17px">Description</div>
<div class="t gh" style="left:334px;top:442px;letter-spacing:-0.11px">Location</div>
<div class="t gh" style="left:456px;top:442px;letter-spacing:0.03px">Qty Credit</div>
<div class="t gh" style="left:547px;top:442px;letter-spacing:0.06px">Net Invoiced</div>
<div class="t gh" style="left:638px;top:442px;letter-spacing:-0.27px">Qty Return</div>
<div class="t gh" style="left:729px;top:442px;letter-spacing:-0.07px">Net Delivered</div>
<div class="t gh" style="left:821px;top:442px;letter-spacing:-0.04px">Qty Backorder</div>
<div class="t gh" style="left:913px;top:442px;letter-spacing:-0.06px">Unit Cost</div>
<div class="t gh" style="left:988px;top:442px;letter-spacing:-0.22px">Price (Excl)</div>
<div class="t gh" style="left:1080px;top:442px;letter-spacing:0.34px">Tax</div>
<div class="t gh" style="left:1181px;top:442px;letter-spacing:0.14px">Total</div>
<div class="t gf" style="left:36px;top:751px;letter-spacing:0.34px">0 lines</div>
<div class="t gf" style="right:793px;top:751px;letter-spacing:0.80px">0.00</div>
<div class="t gf" style="right:611px;top:751px;letter-spacing:0.80px">0.00</div>
<div class="t gf" style="right:427px;top:751px;letter-spacing:0.80px">0.00</div>
<div class="t gf" style="right:160px;top:751px;letter-spacing:0.80px">$0.00</div>
<div class="t gf" style="right:21px;top:751px;letter-spacing:0.80px">$0.00</div>
<svg class="a" style="left:505px;top:439px" width="13" height="20" viewBox="0 0 13 20"><path d="M0.5 0.8 L0.5 16.2 L4.1 12.8 L6.6 18.8 L9 17.8 L6.5 12 L11.4 12 Z" fill="#fff" stroke="#000" stroke-width="1" stroke-linejoin="miter"/></svg>
<!--GRID-->

<!-- ===== status bar ===== -->
<div class="a" style="left:0;top:787px;width:1331px;height:26px;background:#106ebe"></div>
<div class="t" style="left:6px;top:794px;color:#fff;letter-spacing:-0.09px">Currency: AUD</div>

<svg class="a" style="left:1290px;top:791px" width="18" height="18" viewBox="0 0 18 18"><circle cx="9" cy="9" r="8" fill="#cf4a2e"/><path d="M5.6 5.6 L12.4 12.4 M12.4 5.6 L5.6 12.4" stroke="#fff" stroke-width="2.3"/></svg>
<svg class="a" style="left:1315px;top:797px" width="12" height="12" viewBox="0 0 12 12" fill="#7fb0dc"><rect x="9" y="1" width="2" height="2"/><rect x="5" y="5" width="2" height="2"/><rect x="9" y="5" width="2" height="2"/><rect x="1" y="9" width="2" height="2"/><rect x="5" y="9" width="2" height="2"/><rect x="9" y="9" width="2" height="2"/></svg>
<!--ICONS-STATUS-->
</body>
</html>
